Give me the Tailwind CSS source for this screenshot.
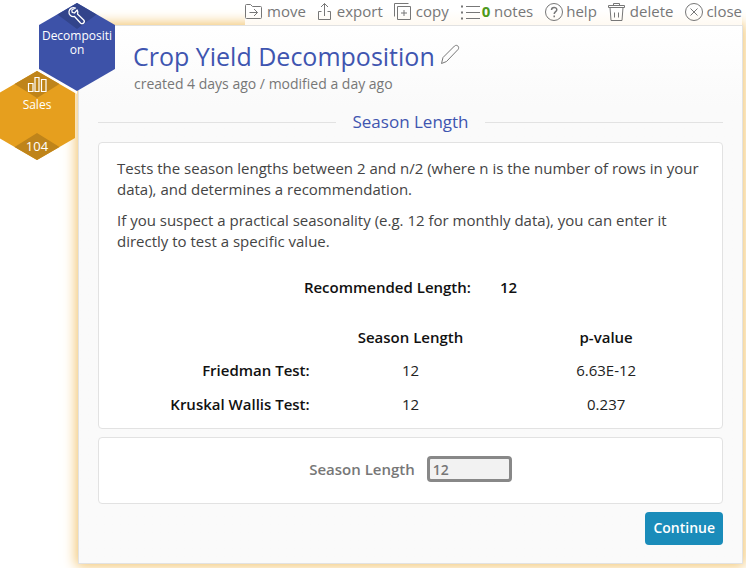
<!DOCTYPE html>
<html lang="en">
<head>
    <meta charset="UTF-8">
    <meta name="viewport" content="width=device-width, initial-scale=1.0">
    <title>Crop Yield Decomposition</title>
    <script src="https://cdn.jsdelivr.net/npm/@tailwindcss/browser@4"></script>
</head>
<body class="relative bg-white font-['Open_Sans',sans-serif] text-[15px] text-[#444] overflow-hidden">

    <!-- Toolbar -->
    <nav class="relative z-10 ml-[245px] mr-1 h-[25px] pb-1 flex justify-between items-center text-[#777] text-[15px] leading-5 whitespace-nowrap bg-linear-to-b from-white from-40% to-[#fffaf2]">
        <button class="flex items-center gap-1">
            <svg class="w-[18px] h-5" viewBox="0 0 18 20" fill="none" stroke="#777"><path d="M.5 16.500V4.500q0-1 1-1h4l2 2h8q1 0 1 1v10q0 1-1 1h-14q-1 0-1-1zM4.500 11.500h8M9 8l3.500 3.500L9 15"/></svg>
            move
        </button>
        <button class="flex items-center gap-1">
            <svg class="w-4 h-5" viewBox="0 0 16 20" fill="none" stroke="#777"><path d="M4.500 10.500h-3v8h12v-8h-3M7.500 15V2.500M4 6l3.500-3.500L11 6"/></svg>
            export
        </button>
        <button class="flex items-center gap-1">
            <svg class="w-[18px] h-5" viewBox="0 0 18 20" fill="none" stroke="#777"><path d="M.5 15.500v-13h14M3.500 5.500h13v13h-13zM10 9v6M7 12h6"/></svg>
            copy
        </button>
        <button class="flex items-center gap-[2px]">
            <svg class="w-5 h-5" viewBox="0 0 20 20" fill="none" stroke="#777"><path d="M6 5.500h14M6 11.500h14M6 17.500h14"/><path stroke-width="2" d="M1 5.500h2M1 11.500h2M1 17.500h2"/></svg>
            <span><b class="text-[#4e9a1c]">0</b> notes</span>
        </button>
        <button class="flex items-center gap-[2px]">
            <svg class="w-5 h-5" viewBox="0 0 20 20" fill="none" stroke="#777"><circle cx="10" cy="11" r="8.500"/><path stroke-width="1.500" d="M7.500 9c0-3.500 5.300-3.300 5.300-.3 0 2-2.600 2-2.600 4.300M10.200 14.500v1.700"/></svg>
            help
        </button>
        <button class="flex items-center gap-[5px]">
            <svg class="w-[17px] h-5" viewBox="0 0 17 20" fill="none" stroke="#777"><path d="M.5 6.500v-2h16v2H.5zM5.500 4.500v-2h6v2M2 6.500l1 13h11l1-13M6.500 11.500v5M10.500 11.500v5"/></svg>
            delete
        </button>
        <button class="flex items-center gap-[2px]">
            <svg class="w-5 h-5" viewBox="0 0 20 20" fill="none" stroke="#777"><circle cx="10" cy="11" r="8.500"/><path d="M6.500 7.500l7 7M13.500 7.500l-7 7"/></svg>
            close
        </button>
    </nav>

    <!-- Panel -->
    <main class="ml-[78px] mr-[3px] mb-1 px-[19px] pb-[18px] border border-[#e2e2e2] bg-linear-to-b from-white to-[#fafafa] to-[80px] shadow-[0_0_12px_2px_#f2c46e]">
        <header class="pl-[35px] pt-3">
            <h1 class="flex items-center gap-[6px] text-[25px] leading-9 text-[#3f55b0]">
                Crop Yield Decomposition
                <button aria-label="Rename">
                    <svg class="w-5 h-8" viewBox="0 0 20 32" fill="none" stroke="#777" stroke-linejoin="round"><path d="M.5 23.500l1.500-6L13.500 6c2.500-2 5.500 1 3.500 3.500L5.500 21.500.5 23.500z"/></svg>
                </button>
            </h1>
            <p class="pl-px text-sm leading-5 text-[#777]">created 4 days ago / modified a day ago</p>
        </header>

        <div class="mt-4 flex items-center gap-4">
            <hr class="grow border-[#e2e2e2]">
            <h2 class="text-[17px] leading-6 text-[#3f55b0]">Season Length</h2>
            <hr class="grow border-[#e2e2e2]">
        </div>

        <section class="mt-2 px-[18px] pt-[15px] pb-[7px] bg-white border border-[#e2e2e2] rounded">
            <p class="leading-[21px]">Tests the season lengths between 2 and n/2 (where n is the number of rows in your data), and determines a recommendation.</p>
            <p class="mt-[10px] leading-[21px]">If you suspect a practical seasonality (e.g. 12 for monthly data), you can enter it directly to test a specific value.</p>

            <div class="mt-[25px] flex justify-center gap-[29px] leading-[21px] font-semibold text-[#111]">
                <span>Recommended Length:</span>
                <span>12</span>
            </div>

            <table class="mt-[23px] w-full table-fixed text-center text-[#222]">
                <thead>
                    <tr class="h-8 text-[#111]">
                        <td></td>
                        <th class="font-semibold">Season Length</th>
                        <th class="font-semibold">p-value</th>
                    </tr>
                </thead>
                <tbody>
                    <tr class="h-[34px]">
                        <th class="pr-[3px] text-right font-semibold text-[#111]">Friedman Test:</th>
                        <td>12</td>
                        <td>6.63E-12</td>
                    </tr>
                    <tr class="h-[34px]">
                        <th class="pr-[3px] text-right font-semibold text-[#111]">Kruskal Wallis Test:</th>
                        <td>12</td>
                        <td>0.237</td>
                    </tr>
                </tbody>
            </table>
        </section>

        <section class="mt-2 h-[67px] flex justify-center items-baseline gap-3 pt-[18px] bg-white border border-[#e2e2e2] rounded font-semibold text-[#777]">
            <label for="season-length">Season Length</label>
            <input id="season-length" type="text" value="12" class="w-[85px] h-[26px] px-[3px] border-3 border-[#888] rounded bg-[#f2f2f2] text-sm font-semibold">
        </section>

        <div class="mt-2 flex justify-end">
            <button class="h-[33px] px-2 pb-px rounded bg-[#1a8cba] text-sm font-semibold text-white">Continue</button>
        </div>
    </main>

    <!-- Analysis hexagon -->
    <a href="#" class="absolute z-20 left-[39px] top-[3px] w-[76px] h-[88px] text-center text-xs leading-[14px] text-white">
        <svg class="absolute inset-0 w-full h-full overflow-visible" viewBox="0 0 76 88" fill="none">
            <path fill="#fff" d="M-2 66l40 25v-8z"/>
            <path fill="#3d52a8" d="M38 0L76 22v44L38 88 0 66V22z"/>
            <path fill="#32448b" d="M38 0L57.500 11.500 38 26 18.500 11.500z"/>
            <path stroke="#fff" stroke-width="1.300" stroke-linejoin="round" d="M36.500 5c-3-1.200-6 .5-6.500 3.500-.5 3.500 2.500 5.800 5.500 5l6 6.500c2.200 1.800 5-.8 3.200-3l-6.200-6c.6-1.500.3-3-.3-4l-2.700 3-2.300-.7-.4-2.300z"/>
        </svg>
        <span class="relative block pt-[26px]">Decompositi<br>on</span>
    </a>

    <!-- Source data hexagon -->
    <a href="#" class="absolute z-10 -left-px top-[71px] w-[76px] h-[89px] text-center text-xs leading-[14px] text-white">
        <svg class="absolute inset-0 w-full h-full" viewBox="0 0 76 89" fill="none">
            <path fill="#e69f1e" d="M38 0L76 22v45L38 89 0 67V22z"/>
            <path fill="#bf841a" d="M38 0L60.500 13 38 27 15.500 13zM38 62L60.500 76 38 89 15.500 76z"/>
            <path stroke="#fff" stroke-width="1.200" d="M29.500 12.500h4.500v8h-4.500zM36 6.500h4v14h-4zM42.500 8.500h4.500v12h-4.500z"/>
        </svg>
        <span class="relative flex flex-col justify-between h-full pt-[27px] pb-[7px]">
            <span>Sales</span>
            <span class="text-[13px]">104</span>
        </span>
    </a>

</body>
</html>
